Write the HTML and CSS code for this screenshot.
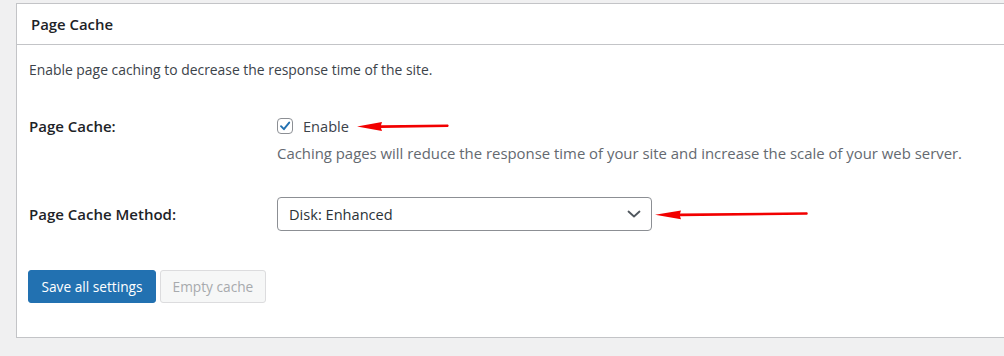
FILE: index.html
```html
<!DOCTYPE html>
<html lang="en">
<head>
  <meta charset="UTF-8" />
  <title>Page Cache</title>
  <link rel="stylesheet" href="styles.css">
</head>
<body>

  <div class="postbox">
    <h2 class="postbox-title">Page Cache</h2>

    <div class="inside">
      <p class="intro">Enable page caching to decrease the response time of the site.</p>

      <div class="form-table">
        <div class="form-label">Page Cache:</div>
        <div class="form-field">
          <label class="check-row">
            <span class="checkbox">
              <svg width="14" height="14" viewBox="0 0 14 14"><path d="M3 7.2 L5.9 10.2 L11.2 3.6" fill="none" stroke="#2271b1" stroke-width="1.9" stroke-linecap="round" stroke-linejoin="round"/></svg>
            </span>
            Enable
            <svg class="pointer pointer-short" width="94" height="12" viewBox="0 0 94 12"><path d="M0 6.5 L25 2 L24 5.2 L91 4.4 Q92.5 5.6 91 6.9 L24 8 L25 11 Z" fill="#f20000"/></svg>
          </label>
          <p class="description">Caching pages will reduce the response time of your site and increase the scale of your web server.</p>
        </div>

        <div class="form-label form-label-select">Page Cache Method:</div>
        <div class="form-field select-row">
          <div class="select">
            <span>Disk: Enhanced</span>
            <svg width="14" height="8" viewBox="0 0 14 8"><path d="M1.5 1.5 L7 6.5 L12.5 1.5" fill="none" stroke="#50575e" stroke-width="1.8" stroke-linecap="round" stroke-linejoin="round"/></svg>
          </div>
          <svg class="pointer pointer-long" width="154" height="12" viewBox="0 0 154 12"><path d="M0 6.8 L26 2.4 L25 5.5 L152 4.3 Q153.5 5.5 152 6.8 L25 8.3 L26 11.2 Z" fill="#f20000"/></svg>
        </div>
      </div>

      <div class="actions">
        <button class="button button-primary">Save all settings</button>
        <button class="button button-disabled" disabled>Empty cache</button>
      </div>
    </div>
  </div>

</body>
</html>
```

FILE: styles.css
```css
* {
  box-sizing: border-box;
  margin: 0;
  padding: 0;
}

body {
  font-family: "Open Sans", "Noto Sans", sans-serif;
  font-size: 14px;
  line-height: 20px;
  color: #3c434a;
  background-color: #f0f0f1;
  overflow: hidden;
}

.postbox {
  margin: 3px -20px 0 16px;
  background-color: #fff;
  border: 1px solid #c3c4c7;
}

.postbox-title {
  height: 41px;
  padding: 0 14px;
  line-height: 41px;
  font-size: 14.9px;
  font-weight: 600;
  color: #1d2327;
  border-bottom: 1px solid #c3c4c7;
}

.inside {
  padding: 15px 12px 34px;
}

.intro {
  font-size: 13.9px;
  color: #3c434a;
}

.form-table {
  display: grid;
  grid-template-columns: 248px 1fr;
  row-gap: 34px;
  margin-top: 36px;
}

.form-label {
  font-size: 15px;
  font-weight: 600;
  color: #1d2327;
}

.form-label-select {
  line-height: 34px;
}

.check-row {
  display: flex;
  align-items: center;
  gap: 10px;
  height: 20px;
  font-size: 14.6px;
}

.checkbox {
  width: 16px;
  height: 16px;
  border: 1px solid #8c8f94;
  border-radius: 4px;
  display: flex;
  align-items: center;
  justify-content: center;
}

.description {
  margin-top: 7px;
  font-size: 14.9px;
  color: #646970;
}

.pointer {
  display: block;
}

.pointer-short {
  margin-left: -2px;
}

.select-row {
  display: flex;
  align-items: center;
  gap: 3px;
}

.select {
  width: 375px;
  height: 34px;
  padding: 0 10px 0 11px;
  border: 1px solid #8c8f94;
  border-radius: 4px;
  display: flex;
  align-items: center;
  justify-content: space-between;
  font-size: 14.6px;
  color: #2c3338;
}

.actions {
  display: flex;
  gap: 4px;
  margin: 39px 0 0 -1px;
}

.button {
  height: 33px;
  padding: 0 11.5px;
  font-family: inherit;
  font-size: 13.7px;
  border-radius: 3px;
  border: 1px solid;
}

.button-primary {
  padding: 0 12.5px;
  background-color: #2271b1;
  border-color: #2271b1;
  color: #fff;
}

.button-disabled {
  background-color: #f6f7f7;
  border-color: #dcdcde;
  color: #a7aaad;
}
```
